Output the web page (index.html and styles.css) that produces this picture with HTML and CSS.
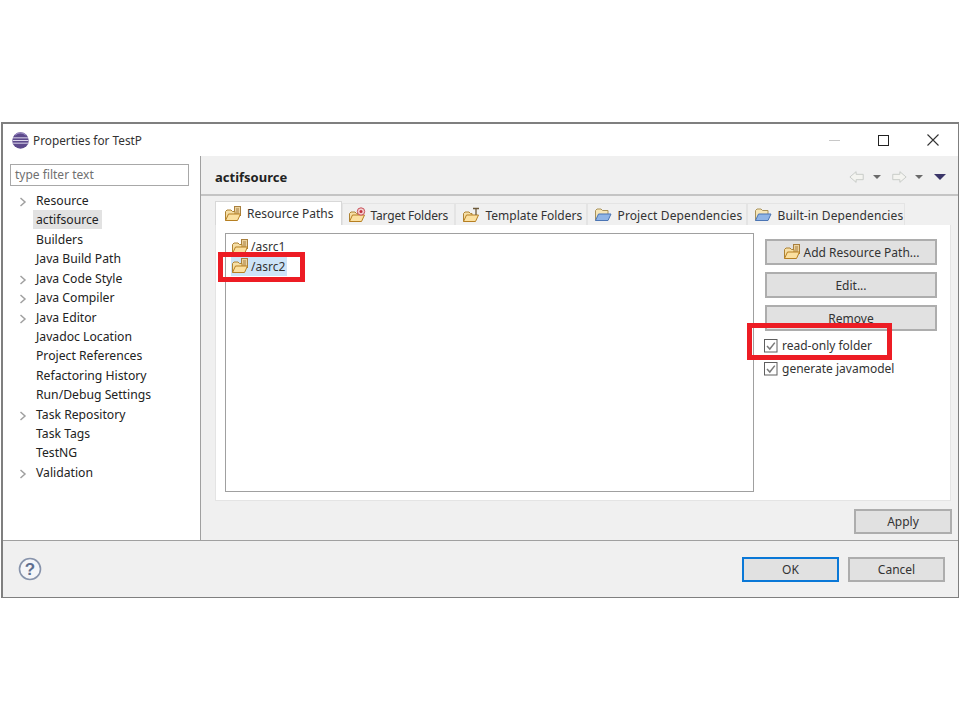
FILE: index.html
```html
<!DOCTYPE html>
<html>
<head>
<meta charset="utf-8">
<title>Properties for TestP</title>
<link rel="stylesheet" href="styles.css">
</head>
<body>
<svg class="defs" width="0" height="0" aria-hidden="true">
  <defs>
    <symbol id="folder" viewBox="0 0 18 16">
      <rect x="10.500" y="0.500" width="6" height="9" fill="#ecd3a0" stroke="#a9803e"/>
      <path d="M12 3h3M12 5h3M12 7h3" stroke="#a9803e"/>
      <path d="M1.500 14.500V5.500L3 4h4l1.500 1.500H11V8" fill="#f6dfa6" stroke="#ae8232"/>
      <path d="M1.500 14.500L4.500 8H16.500L13.500 14.500Z" fill="#fbe0a0" stroke="#b67f22"/>
    </symbol>
    <symbol id="folder-target" viewBox="0 0 18 16">
      <path d="M1.500 14.500V6.500L3 5h4l1.500 1.500H10V8" fill="#f6dfa6" stroke="#ae8232"/>
      <path d="M1.500 14.500L4.500 8H16.500L13.500 14.500Z" fill="#fbe0a0" stroke="#b67f22"/>
      <circle cx="13" cy="4.500" r="3.700" fill="#f3d0d0" stroke="#c8505a"/>
      <circle cx="13" cy="4.500" r="1.500" fill="#c0303c"/>
    </symbol>
    <symbol id="folder-template" viewBox="0 0 18 16">
      <path d="M1.500 14.500V6.500L3 5h4l1.500 1.500H10V8" fill="#f6dfa6" stroke="#ae8232"/>
      <path d="M1.500 14.500L4.500 8H16.500L13.500 14.500Z" fill="#fbe0a0" stroke="#b67f22"/>
      <path d="M11 1.500h6M14 1.500V8" stroke="#6d5a3a" stroke-width="1.300" fill="none"/>
    </symbol>
    <symbol id="folder-blue" viewBox="0 0 18 16">
      <path d="M1.500 13.500V3.500L3 2h4l1.500 1.500H14V7" fill="#f6e6b8" stroke="#a9925a"/>
      <path d="M1.500 13.500L4.500 7H17L14 13.500Z" fill="#8fb4e6" stroke="#4a74b4"/>
    </symbol>
    <symbol id="chev" viewBox="0 0 8 10">
      <path d="M1.500 1L6 5L1.500 9" fill="none" stroke="#a0a0a0" stroke-width="1.500"/>
    </symbol>
    <symbol id="check" viewBox="0 0 14 14">
      <rect x="0.500" y="0.500" width="12.500" height="12.500" fill="#fff" stroke="#5f5f5f"/>
      <path d="M3 7l2.800 3L10.800 3.600" fill="none" stroke="#7a7a7a" stroke-width="1.500"/>
    </symbol>
  </defs>
</svg>

<div class="window">
  <header class="titlebar">
    <svg class="app-icon" width="17" height="17" viewBox="0 0 16 16">
      <circle cx="8" cy="8" r="7.800" fill="#5d4a8c"/>
      <path d="M1 5.500h14M0.500 8h15M1 10.500h14" stroke="#e4def0" stroke-width="0.900"/>
      <path d="M3 3c1-1.200 3-2 5-2s4 .8 5 2" fill="none" stroke="#9c8cc4"/>
    </svg>
    <span class="title">Properties for TestP</span>
    <div class="win-controls">
      <span class="win-min"></span>
      <span class="win-max"></span>
      <svg class="win-close" width="12" height="12" viewBox="0 0 12 12"><path d="M.5.500l11 11M11.500.500l-11 11" stroke="#333" stroke-width="1.100"/></svg>
    </div>
  </header>

  <div class="main">
    <aside class="sidebar">
      <div class="filter">type filter text</div>
      <ul class="tree">
        <li class="node"><svg class="chev"><use href="#chev"/></svg><span>Resource</span></li>
        <li class="node"><span class="selected">actifsource</span></li>
        <li class="node"><span>Builders</span></li>
        <li class="node"><span>Java Build Path</span></li>
        <li class="node"><svg class="chev"><use href="#chev"/></svg><span>Java Code Style</span></li>
        <li class="node"><svg class="chev"><use href="#chev"/></svg><span>Java Compiler</span></li>
        <li class="node"><svg class="chev"><use href="#chev"/></svg><span>Java Editor</span></li>
        <li class="node"><span>Javadoc Location</span></li>
        <li class="node"><span>Project References</span></li>
        <li class="node"><span>Refactoring History</span></li>
        <li class="node"><span>Run/Debug Settings</span></li>
        <li class="node"><svg class="chev"><use href="#chev"/></svg><span>Task Repository</span></li>
        <li class="node"><span>Task Tags</span></li>
        <li class="node"><span>TestNG</span></li>
        <li class="node"><svg class="chev"><use href="#chev"/></svg><span>Validation</span></li>
      </ul>
    </aside>

    <section class="content">
      <div class="page-head">
        <h1>actifsource</h1>
        <div class="nav-tools">
          <svg width="16" height="14" viewBox="0 0 18 14"><path d="M1 7L8 1v3h8v6H8v3z" fill="#f4f4f0" stroke="#c4c8c4"/></svg>
          <i class="drop"></i>
          <svg class="nav-fwd" width="16" height="14" viewBox="0 0 18 14"><path d="M17 7L10 1v3H2v6h8v3z" fill="#f4f4f0" stroke="#c4c8c4"/></svg>
          <i class="drop"></i>
          <i class="drop dark"></i>
        </div>
      </div>

      <div class="tabs">
        <div class="tab active"><svg class="ic"><use href="#folder"/></svg>Resource Paths</div>
        <div class="tab tab-target"><svg class="ic"><use href="#folder-target"/></svg>Target Folders</div>
        <div class="tab tab-template"><svg class="ic"><use href="#folder-template"/></svg>Template Folders</div>
        <div class="tab tab-project"><svg class="ic"><use href="#folder-blue"/></svg>Project Dependencies</div>
        <div class="tab tab-builtin"><svg class="ic"><use href="#folder-blue"/></svg>Built-in Dependencies</div>
      </div>

      <div class="tab-body">
        <div class="list">
          <div class="list-row"><svg class="ic"><use href="#folder"/></svg><span>/asrc1</span></div>
          <div class="list-row sel"><svg class="ic"><use href="#folder"/></svg><span>/asrc2</span></div>
        </div>
        <div class="actions">
          <button class="btn"><svg class="ic"><use href="#folder"/></svg>Add Resource Path...</button>
          <button class="btn">Edit...</button>
          <button class="btn">Remove</button>
          <label class="check first"><svg class="box"><use href="#check"/></svg>read-only folder</label>
          <label class="check"><svg class="box"><use href="#check"/></svg>generate javamodel</label>
        </div>
      </div>

      <div class="apply-row"><button class="btn apply">Apply</button></div>
    </section>
  </div>

  <footer class="footer">
    <svg class="help" width="24" height="24" viewBox="0 0 24 24">
      <circle cx="12" cy="12" r="10.500" fill="#f4f5f8" stroke="#8793ab" stroke-width="1.600"/>
      <text x="12" y="17.500" text-anchor="middle" class="help-q">?</text>
    </svg>
    <div class="foot-btns">
      <button class="btn foot default">OK</button>
      <button class="btn foot">Cancel</button>
    </div>
  </footer>
</div>

<div class="mark mark-list"></div>
<div class="mark mark-check"></div>
</body>
</html>
```
FILE: styles.css
```css
* { box-sizing: border-box; }
html, body { margin: 0; padding: 0; background: #fff; }
body {
  position: relative;
  width: 960px;
  height: 720px;
  padding: 122px 0 0 1px;
  font-family: "Noto Sans", "Open Sans", sans-serif;
  font-size: 12px;
  color: #222;
  overflow: hidden;
}
.defs { position: absolute; }
.window {
  width: 958px;
  height: 476px;
  border: 1px solid #7f7f7f;
  border-top-width: 2px;
  border-left-width: 2px;
  display: flex;
  flex-direction: column;
  background: #fff;
}
.titlebar {
  height: 32px;
  flex: none;
  display: flex;
  align-items: center;
  padding-left: 9px;
  background: #fff;
}
.app-icon { margin-right: 4px; }
.title { font-size: 11.800px; color: #333; }
.win-controls { margin-left: auto; display: flex; align-items: center; padding-right: 19px; }
.win-min { width: 11px; height: 1px; background: #c8c8c8; margin-right: 38px; }
.win-max { width: 11px; height: 11px; border: 1.500px solid #222; margin-right: 38px; }
.main { flex: 1; display: flex; min-height: 0; }
.sidebar {
  width: 198px;
  flex: none;
  border-right: 1px solid #a0a0a0;
  padding: 8px 0 0 7px;
  background: #fff;
}
.filter {
  width: 179px;
  height: 22px;
  border: 1px solid #a8a8a8;
  padding-left: 4px;
  line-height: 19px;
  color: #707070;
}
.tree { list-style: none; margin: 5px 0 0; padding: 0; }
.node {
  height: 19.430px;
  line-height: 19px;
  font-size: 12.200px;
  padding-left: 26px;
  position: relative;
  color: #222;
  white-space: nowrap;
}
.node .chev { position: absolute; left: 9px; top: 6px; width: 8px; height: 10px; }
.selected { background: #e2e2e2; display: inline-block; padding: 0 3px; margin-left: -3px; height: 19px; }
.content {
  flex: 1;
  min-width: 0;
  background: #f0f0f0;
  display: flex;
  flex-direction: column;
}
.page-head {
  height: 40px;
  flex: none;
  border-bottom: 2px solid #c4c4c4;
  display: flex;
  align-items: center;
  padding: 4px 12px 0 14px;
}
.page-head h1 { margin: 0; font-size: 13px; font-weight: 700; color: #222; }
.nav-tools { margin-left: auto; display: flex; align-items: center; gap: 8px; }
.nav-fwd { margin-left: 2px; }
.drop { width: 0; height: 0; border-left: 4px solid transparent; border-right: 4px solid transparent; border-top: 4px solid #6a6a6a; }
.drop.dark { border-left-width: 6px; border-right-width: 6px; border-top: 6px solid #3a3568; margin-left: 3px; }
.tabs {
  height: 24px;
  flex: none;
  margin: 5px 0 0 14px;
  display: flex;
  align-items: flex-end;
}
.tab {
  flex: none;
  height: 22px;
  display: flex;
  align-items: center;
  gap: 6px;
  padding: 1px 0 0 6px;
  background: #f0f0f0;
  border: 1px solid #e4e4e4;
  border-bottom: 0;
  color: #333;
  white-space: nowrap;
}
.tab.active {
  height: 24px;
  padding: 0 7px 0 8px;
  gap: 5px;
  background: #fff;
  border-color: #d8d8d8;
}
.tab-target { width: 113px; padding-left: 5px; gap: 5px; letter-spacing: -0.200px; }
.tab-template { width: 132px; }
.tab-project { width: 160px; letter-spacing: 0.120px; }
.tab-builtin { width: 158px; letter-spacing: 0.120px; }
.ic { width: 18px; height: 16px; flex: none; }
.tab-body {
  height: 276px;
  flex: none;
  margin: 0 7px 0 14px;
  background: #fff;
  border: 1px solid #e4e4e4;
  border-top: 0;
  display: flex;
  padding: 8px 13px 8px 9px;
}
.list {
  width: 529px;
  height: 259px;
  flex: none;
  border: 1px solid #a0a0a0;
  padding: 3px 0 0 5px;
}
.list-row { height: 19.500px; display: flex; align-items: center; gap: 1px; color: #333; }
.list-row span { padding: 0 1px; }
.list-row.sel { background: #cde4f8; width: 56px; }
.actions {
  flex: 1;
  margin-left: 11px;
  padding-top: 6px;
  display: flex;
  flex-direction: column;
  gap: 7px;
}
.btn {
  font: inherit;
  color: #333;
  height: 26px;
  padding: 0;
  background: #e1e1e1;
  border: 2px solid #adadad;
  display: flex;
  align-items: center;
  justify-content: center;
  gap: 3px;
}
.check { height: 23px; display: flex; align-items: center; gap: 4px; margin: -7px 0 0 -1px; color: #333; }
.check.first { margin-top: -4px; }
.box { width: 14px; height: 14px; flex: none; }
.apply-row { flex: 1; display: flex; justify-content: flex-end; align-items: flex-start; padding: 8px 6px 0 0; }
.apply { width: 98px; height: 25px; }
.footer {
  height: 57px;
  flex: none;
  background: #f0f0f0;
  border-top: 1px solid #a0a0a0;
  display: flex;
  align-items: center;
  padding: 0 13px 0 15px;
}
.help-q { font-family: "Liberation Sans", sans-serif; font-size: 17px; font-weight: 700; fill: #5f6f90; }
.foot-btns { margin-left: auto; display: flex; gap: 9px; margin-top: 1px; }
.foot { width: 97px; height: 25px; }
.default { border-color: #0a78d7; }
.mark { position: absolute; border: 5px solid #ed1c24; pointer-events: none; }
.mark-list { left: 218px; top: 252px; width: 87px; height: 30px; }
.mark-check { left: 747px; top: 323px; width: 145px; height: 37px; }
```
